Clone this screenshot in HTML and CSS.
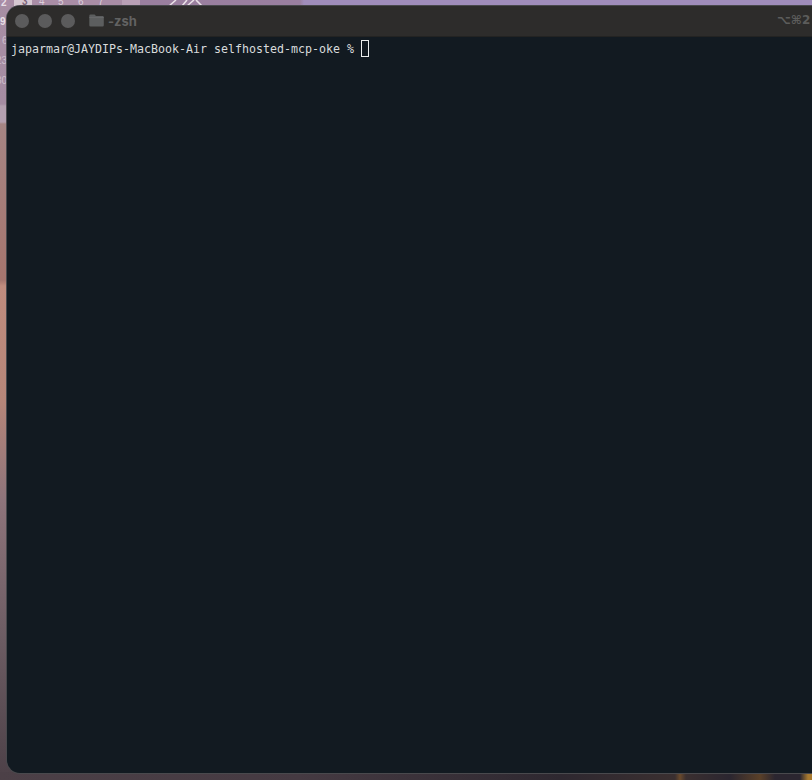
FILE: index.html
```html
<!DOCTYPE html>
<html lang="en">
<head>
<meta charset="utf-8">
<title>-zsh</title>
<link rel="stylesheet" href="styles.css">
</head>
<body>
<div class="desktop-numbers" aria-hidden="true">
  <span class="pale-cell"></span>
  <span class="num n2">2</span><span class="num n3">3</span><span class="num n4">4</span><span class="num n5">5</span><span class="num n6">6</span><span class="num n7">7</span>
  <span class="num s9">9</span><span class="num s6">6</span><span class="num s23">23</span><span class="num s30">30</span>
  <svg class="dial" width="44" height="8" viewBox="0 0 44 8"><path d="M1 6 L8 0 M19 0 L14 6 M26 0 L19 6 M28 0 L34 6" fill="none" stroke="#e9e0e7" stroke-width="1.6"/></svg>
</div>
<main class="window">
  <header class="titlebar">
    <div class="lights">
      <span class="light"></span><span class="light"></span><span class="light"></span>
    </div>
    <svg class="folder" width="15" height="13" viewBox="0 0 15 13"><path d="M1.5 0.5H5.6L7 2H13.6A1.2 1.2 0 0 1 14.8 3.2V11.3A1.2 1.2 0 0 1 13.6 12.5H1.5A1.2 1.2 0 0 1 0.3 11.3V1.7A1.2 1.2 0 0 1 1.5 0.5Z" fill="#5c5e5f"/><path d="M0.3 3.6H14.8" stroke="#6b6d6e" stroke-width="0.8"/></svg>
    <span class="title">-zsh</span>
    <span class="shortcut">⌥⌘2</span>
  </header>
  <section class="terminal">
    <div class="line"><span>japarmar@JAYDIPs-MacBook-Air selfhosted-mcp-oke % </span><span class="cursor"></span></div>
  </section>
</main>
</body>
</html>
```

FILE: styles.css
```css
* { box-sizing: border-box; }

html, body {
  margin: 0;
  height: 100%;
  overflow: hidden;
}

body {
  width: 812px;
  height: 780px;
  padding: 6px 0 7px 7px;
  display: flex;
  position: relative;
  background:
    linear-gradient(to right, #a98da6 0, #a98da6 122px, #b9a0b6 122px, #b9a0b6 140px, #9a7f9f 140px, #9a7fa0 300px, #a08dbb 304px, #a08dbb 812px) top / 100% 5px no-repeat,
    linear-gradient(to right, #4c4047 0, #453a42 300px, #2e2830 560px, #3a2f30 675px, #6a4a2c 680px, #3a2f30 686px, #2b2630 730px, #5a4028 760px, #2b2630 775px, #2b2630 800px, #a87a30 808px) bottom / 100% 8px no-repeat,
    linear-gradient(to bottom, #a78ea4 0, #a58ca2 104px, #b4a0b0 106px, #b4a0b0 122px, #a58584 124px, #a5756e 280px, #c08c7e 286px, #b68679 400px, #8e747b 500px, #6c5c63 640px, #4c4047 780px);
}

.desktop-numbers {
  font-family: "Liberation Sans", Arial, sans-serif;
  font-size: 10px;
  font-weight: 700;
  color: #e8dfe6;
}

.num { position: absolute; line-height: 10px; }
.n2 { left: 1px; top: -2px; }
.n3 { left: 22px; top: -3px; color: #7d6479; }
.n4 { left: 39px; top: -3px; color: #dccfda; font-weight: 400; }
.n5 { left: 58px; top: -3px; color: #dccfda; font-weight: 400; }
.n6 { left: 78px; top: -3px; color: #dccfda; font-weight: 400; }
.n7 { left: 98px; top: -3px; color: #dccfda; font-weight: 400; }
.s9 { left: 0; top: 17px; }
.s6 { left: 2px; top: 36px; color: #cdbecb; font-weight: 400; }
.s23 { left: -4px; top: 56px; color: #cdbecb; font-weight: 400; }
.s30 { left: -4px; top: 76px; color: #cdbecb; font-weight: 400; }

.pale-cell {
  position: absolute;
  left: 14px;
  top: 0;
  width: 18px;
  height: 6px;
  background: #d6c8d2;
}

.dial {
  position: absolute;
  left: 168px;
  top: 0;
}

.window {
  position: relative;
  flex: 1;
  display: flex;
  flex-direction: column;
  min-width: 0;
  border-radius: 13px 0 0 13px;
  overflow: hidden;
  background: #121a21;
  box-shadow: 0 0 0 1px #49494d;
}

.titlebar {
  height: 31px;
  flex: none;
  display: flex;
  align-items: center;
  padding-left: 8px;
  background: #2d2c2b;
  border-bottom: 1px solid #232322;
  position: relative;
}

.lights {
  display: flex;
  gap: 9px;
}

.light {
  width: 14px;
  height: 14px;
  border-radius: 50%;
  background: #5b5b5c;
}

.folder {
  margin-left: 14px;
  margin-top: -2px;
}

.title {
  margin-left: 4px;
  font-family: Inter, "Liberation Sans", sans-serif;
  font-size: 13px;
  font-weight: 700;
  color: #626262;
}

.shortcut {
  position: absolute;
  left: 770px;
  top: 7px;
  white-space: nowrap;
  font-family: "DejaVu Sans", sans-serif;
  font-size: 12px;
  font-weight: 700;
  color: #5c5c5b;
}

.terminal {
  flex: 1;
  padding: 3px 0 0 4px;
  font-family: "DejaVu Sans Mono", monospace;
  font-size: 11.63px;
  color: #d8dbdc;
}

.line {
  display: flex;
  align-items: center;
  height: 17px;
  white-space: pre;
}

.cursor {
  display: block;
  width: 8px;
  height: 17px;
  border: 1.5px solid #eceeee;
}
```
